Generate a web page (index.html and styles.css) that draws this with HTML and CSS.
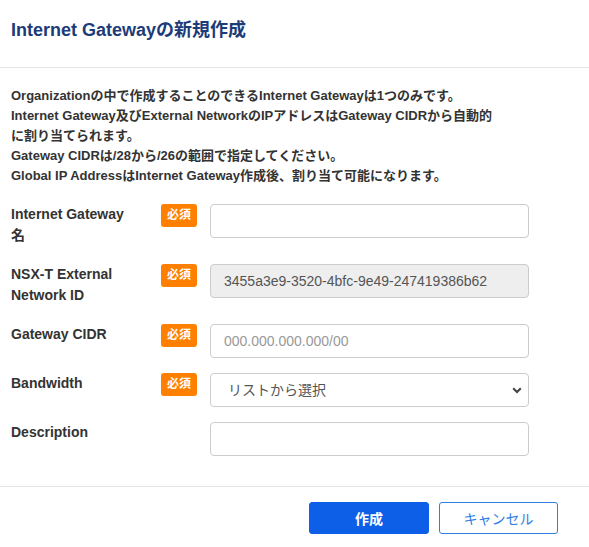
FILE: index.html
```html
<!DOCTYPE html>
<html lang="ja">
<head>
<meta charset="utf-8">
<title>Internet Gatewayの新規作成</title>
<link rel="stylesheet" href="styles.css">
</head>
<body>
<div class="modal">
  <header class="modal-header">
    <h1 class="modal-title">Internet Gatewayの新規作成</h1>
  </header>
  <main class="modal-body">
    <p class="desc">Organizationの中で作成することのできるInternet Gatewayは1つのみです。<br>Internet Gateway及びExternal NetworkのIPアドレスはGateway CIDRから自動的<br>に割り当てられます。<br>Gateway CIDRは/28から/26の範囲で指定してください。<br>Global IP AddressはInternet Gateway作成後、割り当て可能になります。</p>
    <form class="form">
      <div class="row">
        <label class="label">Internet Gateway<br>名</label>
        <span class="badge">必須</span>
        <input class="input" type="text">
      </div>
      <div class="row">
        <label class="label">NSX-T External<br>Network ID</label>
        <span class="badge">必須</span>
        <input class="input input-readonly" type="text" value="3455a3e9-3520-4bfc-9e49-247419386b62" readonly>
      </div>
      <div class="row">
        <label class="label">Gateway CIDR</label>
        <span class="badge">必須</span>
        <input class="input" type="text" placeholder="000.000.000.000/00">
      </div>
      <div class="row">
        <label class="label">Bandwidth</label>
        <span class="badge">必須</span>
        <div class="select-wrap">
          <select class="input select">
            <option>リストから選択</option>
          </select>
          <svg class="chevron" width="10" height="7" viewBox="0 0 10 7"><path d="M1.2 1.3 L5 5 L8.8 1.3" fill="none" stroke="#444" stroke-width="2.1"/></svg>
        </div>
      </div>
      <div class="row">
        <label class="label">Description</label>
        <span class="badge-space"></span>
        <input class="input" type="text">
      </div>
    </form>
  </main>
  <footer class="modal-footer">
    <button class="btn btn-primary" type="button">作成</button>
    <button class="btn btn-outline" type="button">キャンセル</button>
  </footer>
</div>
</body>
</html>
```
FILE: styles.css
```css
* { box-sizing: border-box; }
body {
  margin: 0;
  background: #fff;
  font-family: "Liberation Sans", Arial, "Noto Sans CJK JP", sans-serif;
  color: #333;
}
.modal { width: 589px; }
.modal-header {
  height: 68px;
  padding: 19px 11px 0;
  border-bottom: 1px solid #e5e5e5;
}
.modal-title {
  margin: 0;
  font-size: 18px;
  line-height: 22px;
  font-weight: bold;
  color: #1c3b78;
}
.modal-body { padding: 18px 11px 15px; }
.desc {
  margin: 0;
  font-size: 13px;
  line-height: 20px;
  font-weight: bold;
  color: #333;
  white-space: nowrap;
}
.form { margin-top: 18px; }
.row {
  display: grid;
  grid-template-columns: 150px 49px 319px;
  align-items: start;
  margin-bottom: 15px;
}
.label {
  font-size: 14px;
  line-height: 21px;
  font-weight: bold;
  color: #333;
  padding-bottom: 3px;
}
.badge {
  width: 36px;
  height: 23px;
  border-radius: 3px;
  background: #ff8000;
  color: #fff;
  font-size: 12px;
  font-weight: bold;
  line-height: 23px;
  text-align: center;
}
.input {
  width: 319px;
  height: 34px;
  border: 1px solid #ccc;
  border-radius: 4px;
  padding: 0 13px;
  font-family: "Liberation Sans", Arial, "Noto Sans CJK JP", sans-serif;
  font-size: 14px;
  color: #555;
  background: #fff;
  outline: none;
}
.input::placeholder { color: #999; }
.input-readonly { background: #eee; }
.select-wrap { position: relative; width: 319px; }
.select {
  appearance: none;
  -webkit-appearance: none;
  padding-left: 17px;
}
.chevron {
  position: absolute;
  right: 7px;
  top: 14px;
  pointer-events: none;
}
.modal-footer {
  border-top: 1px solid #e5e5e5;
  padding: 15px 31px 0 0;
  display: flex;
  justify-content: flex-end;
  gap: 10px;
}
.btn {
  height: 32px;
  border-radius: 3px;
  font-family: "Liberation Sans", Arial, "Noto Sans CJK JP", sans-serif;
  font-size: 14px;
  cursor: pointer;
}
.btn-primary {
  width: 120px;
  background: #0e5fe8;
  border: 1px solid #0e5fe8;
  color: #fff;
  font-weight: bold;
}
.btn-outline {
  width: 119px;
  background: #fff;
  border: 1px solid #2f7ee3;
  color: #2f7ee3;
}
```
